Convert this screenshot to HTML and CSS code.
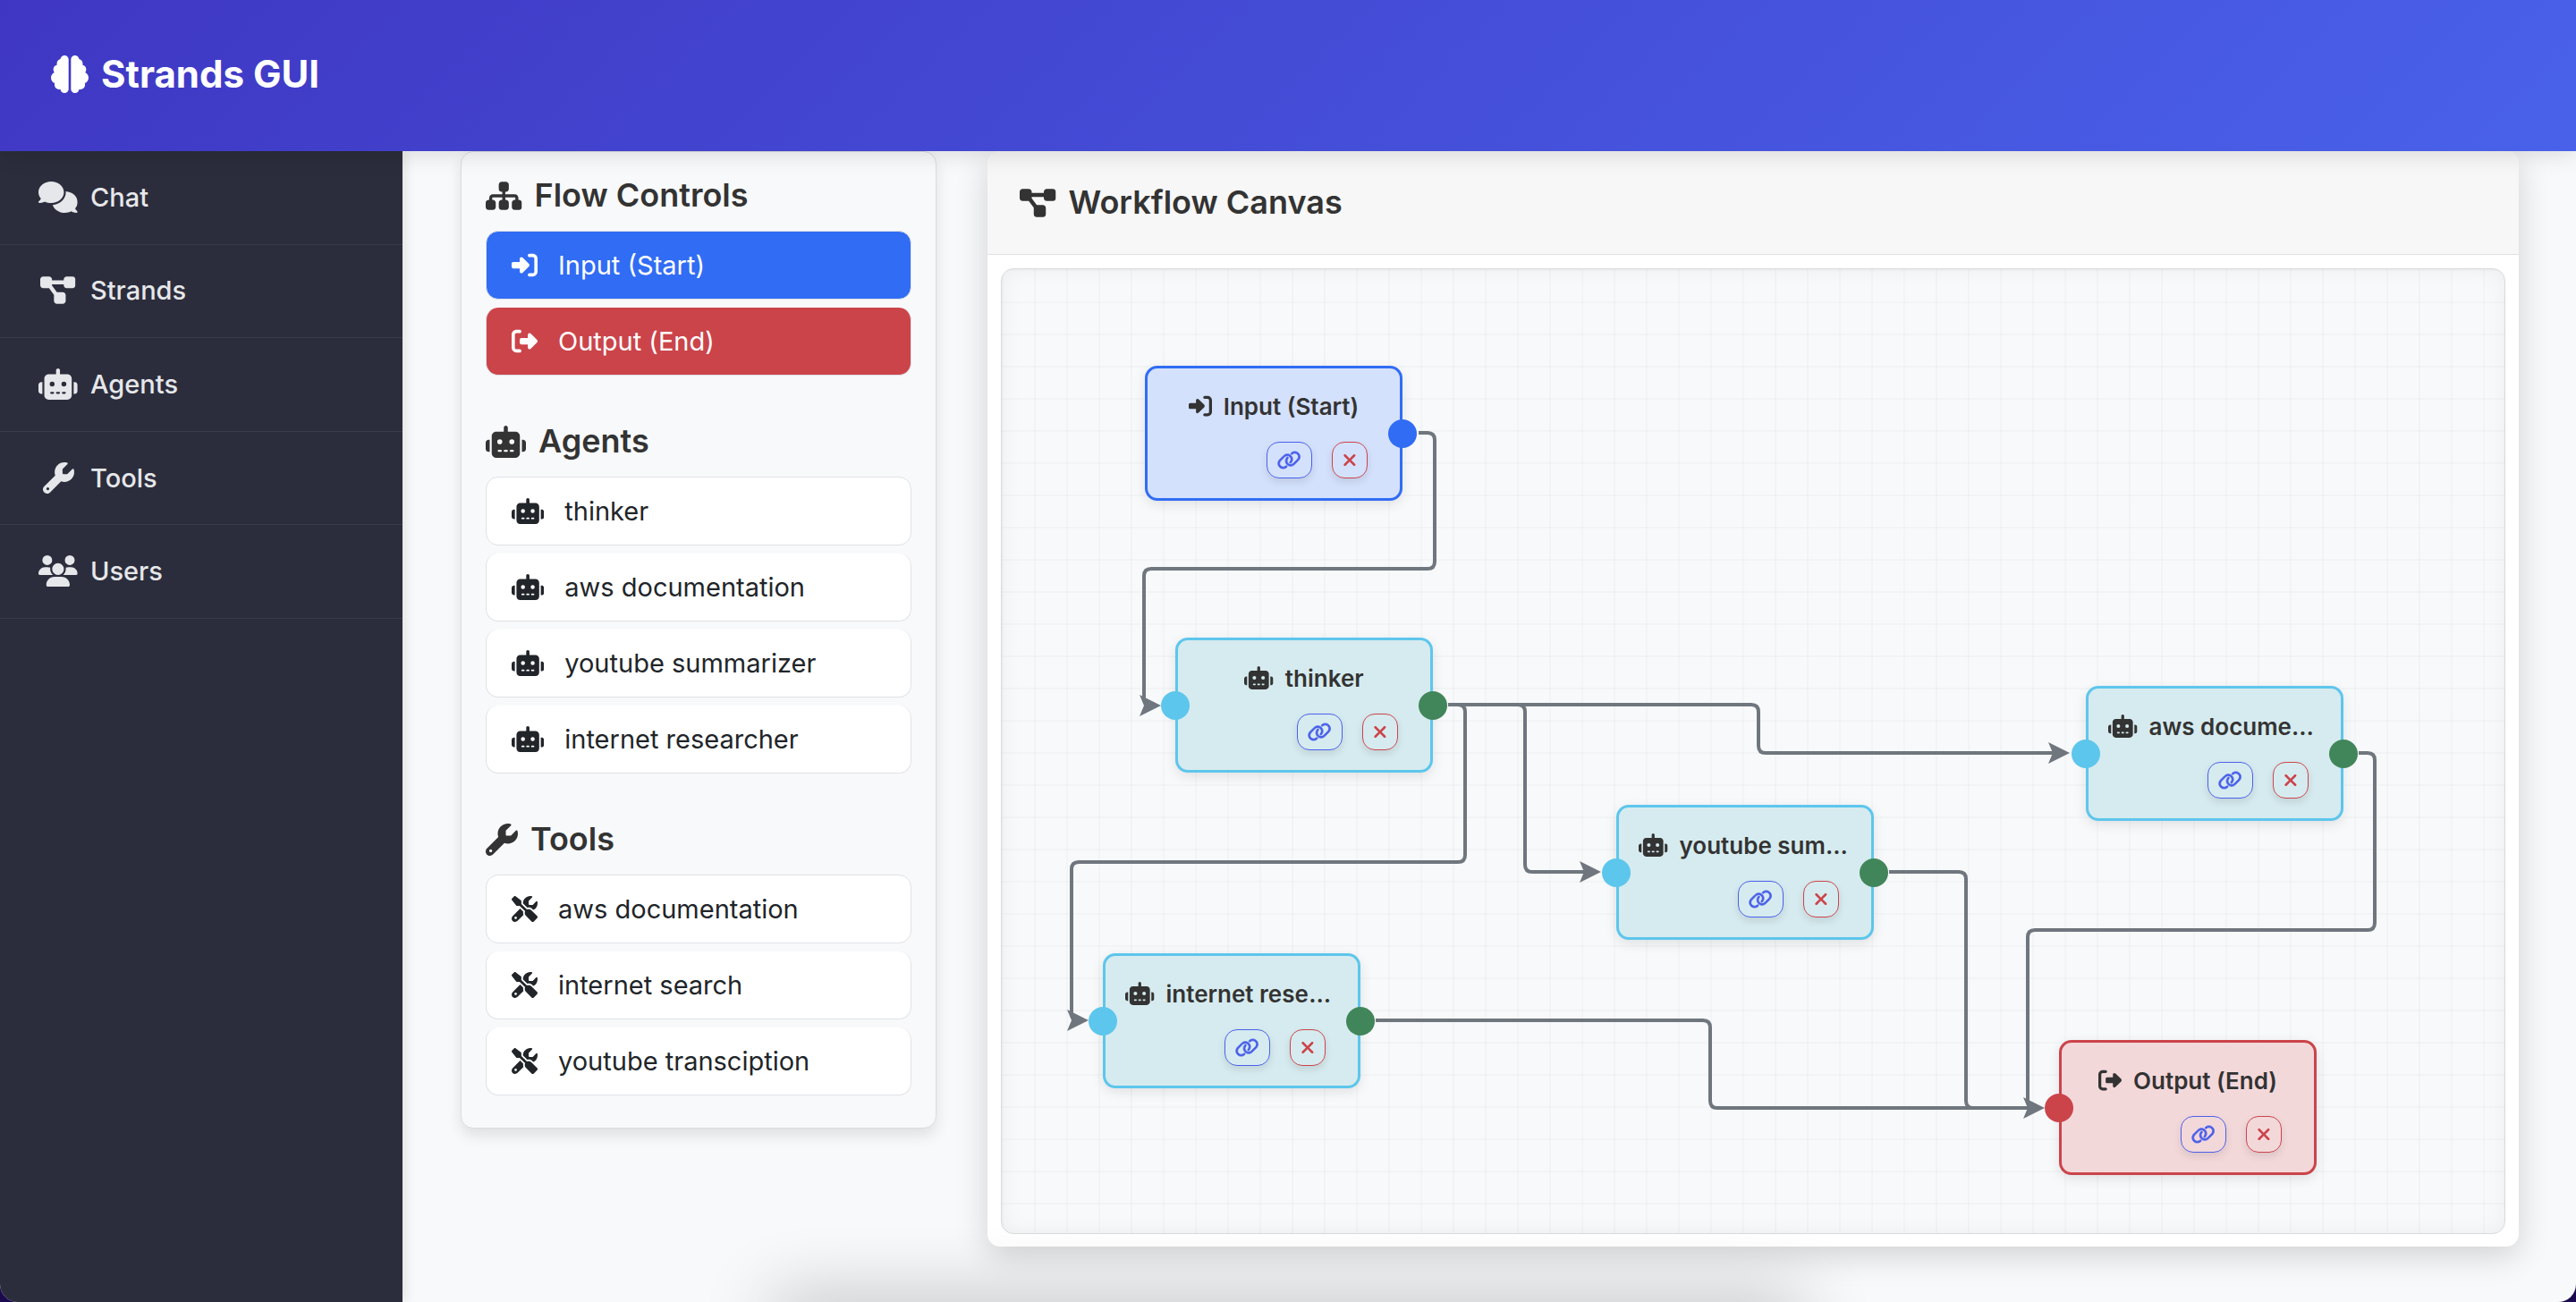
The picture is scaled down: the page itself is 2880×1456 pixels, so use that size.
FILE: index.html
```html
<!DOCTYPE html>
<html lang="en">
<head>
<meta charset="utf-8">
<title>Strands GUI</title>
<link rel="stylesheet" href="styles.css">
</head>
<body>
<svg class="sprite" aria-hidden="true">
  <symbol id="i-brain" viewBox="0 0 512 512"><path d="M184 0c30.900 0 56 25.100 56 56V456c0 30.900-25.100 56-56 56c-28.900 0-52.700-21.900-55.700-50.100c-5.200 1.400-10.700 2.100-16.300 2.100c-35.300 0-64-28.700-64-64c0-7.400 1.300-14.600 3.600-21.200C21.400 367.400 0 338.200 0 304c0-31.900 18.700-59.500 45.800-72.300C37.100 220.800 32 207 32 192c0-30.700 21.600-56.300 50.400-62.600C80.800 123.900 80 118 80 112c0-29.900 20.600-55.100 48.300-62.100C131.300 21.900 155.100 0 184 0zM328 0c28.900 0 52.600 21.900 55.700 49.900c27.800 7 48.300 32.100 48.300 62.100c0 6-.8 11.900-2.400 17.400c28.800 6.200 50.400 31.900 50.400 62.600c0 15-5.100 28.800-13.800 39.700C493.300 244.500 512 272.100 512 304c0 34.200-21.400 63.400-51.600 74.800c2.300 6.600 3.600 13.800 3.600 21.200c0 35.300-28.700 64-64 64c-5.600 0-11.100-.7-16.300-2.100c-3 28.200-26.800 50.100-55.700 50.100c-30.900 0-56-25.100-56-56V56c0-30.900 25.100-56 56-56z"/></symbol>
  <symbol id="i-comments" viewBox="0 0 640 512"><path d="M208 352c114.900 0 208-78.800 208-176S322.900 0 208 0S0 78.800 0 176c0 38.600 14.700 74.300 39.600 103.400c-3.500 9.400-8.700 17.700-14.200 24.700c-4.800 6.200-9.700 11-13.300 14.300c-1.800 1.600-3.300 2.900-4.300 3.700c-.5 .4-.9 .7-1.100 .8l-.2 .2C1 327.200-1.400 334.400 .8 340.900S9.100 352 16 352c21.800 0 43.800-5.600 62.100-12.500c9.200-3.500 17.800-7.400 25.200-11.400C134.100 343.300 169.800 352 208 352zM448 176c0 112.300-99.100 196.900-216.500 207C255.800 457.400 336.400 512 432 512c38.200 0 73.900-8.700 104.700-23.900c7.500 4 16 7.900 25.200 11.400c18.300 6.900 40.300 12.500 62.100 12.500c6.900 0 13.100-4.500 15.200-11.100c2.100-6.600-.2-13.800-5.800-17.900l-.2-.2c-.2-.2-.6-.4-1.100-.8c-1-.8-2.500-2-4.300-3.700c-3.600-3.300-8.500-8.100-13.300-14.300c-5.500-7-10.700-15.400-14.200-24.700c24.900-29 39.600-64.700 39.600-103.400c0-92.800-84.900-168.900-192.600-175.500c.4 5.100 .6 10.300 .6 15.500z"/></symbol>
  <symbol id="i-diagram" viewBox="0 0 576 512"><path d="M0 80C0 53.500 21.500 32 48 32h96c26.500 0 48 21.500 48 48V96H384V80c0-26.500 21.500-48 48-48h96c26.500 0 48 21.500 48 48v96c0 26.500-21.500 48-48 48H432c-26.500 0-48-21.500-48-48V160H192v16c0 1.700-.1 3.400-.3 5L272 288h96c26.500 0 48 21.500 48 48v96c0 26.500-21.500 48-48 48H272c-26.500 0-48-21.500-48-48V336c0-1.700 .1-3.400 .3-5L144 224H48c-26.500 0-48-21.500-48-48V80z"/></symbol>
  <symbol id="i-robot" viewBox="0 0 640 512"><path fill-rule="evenodd" d="M320 0c17.700 0 32 14.300 32 32V96H472c39.800 0 72 32.200 72 72V440c0 39.800-32.200 72-72 72H168c-39.800 0-72-32.200-72-72V168c0-39.800 32.200-72 72-72H288V32c0-17.700 14.300-32 32-32zM208 384c-8.800 0-16 7.200-16 16s7.200 16 16 16h32c8.800 0 16-7.200 16-16s-7.200-16-16-16H208zm96 0c-8.800 0-16 7.200-16 16s7.200 16 16 16h32c8.800 0 16-7.200 16-16s-7.200-16-16-16H304zm96 0c-8.800 0-16 7.200-16 16s7.200 16 16 16h32c8.800 0 16-7.200 16-16s-7.200-16-16-16H400zM264 256a40 40 0 1 0 -80 0 40 40 0 1 0 80 0zm152 40a40 40 0 1 0 0-80 40 40 0 1 0 0 80zM48 224H64V416H48c-26.500 0-48-21.500-48-48V272c0-26.500 21.500-48 48-48zm544 0c26.500 0 48 21.500 48 48v96c0 26.500-21.500 48-48 48H576V224h16z"/></symbol>
  <symbol id="i-wrench" viewBox="0 0 512 512"><path d="M352 320c88.400 0 160-71.600 160-160c0-15.300-2.200-30.100-6.200-44.200c-3.100-10.800-16.400-13.200-24.300-5.300l-76.800 76.800c-3 3-7.100 4.700-11.300 4.700H336c-8.800 0-16-7.200-16-16V118.600c0-4.200 1.700-8.300 4.700-11.300l76.800-76.800c7.900-7.900 5.400-21.200-5.300-24.300C382.100 2.200 367.300 0 352 0C263.600 0 192 71.600 192 160c0 19.100 3.400 37.500 9.500 54.500L19.900 396.100C7.200 408.800 0 426.100 0 444.100C0 481.600 30.400 512 67.900 512c18 0 35.300-7.200 48-19.900L297.500 310.500c17 6.200 35.400 9.500 54.500 9.500zM80 408a24 24 0 1 1 0 48 24 24 0 1 1 0-48z"/></symbol>
  <symbol id="i-users" viewBox="0 0 640 512"><path d="M144 0a80 80 0 1 1 0 160A80 80 0 1 1 144 0zM512 0a80 80 0 1 1 0 160A80 80 0 1 1 512 0zM0 298.700C0 239.800 47.800 192 106.700 192h42.700c15.900 0 31 3.500 44.600 9.700c-1.300 7.200-1.900 14.700-1.900 22.300c0 38.200 16.800 72.500 43.300 96c-.2 0-.4 0-.7 0H21.300C9.600 320 0 310.400 0 298.700zM405.300 320c-.2 0-.4 0-.7 0c26.600-23.500 43.300-57.800 43.300-96c0-7.600-.7-15-1.900-22.300c13.600-6.300 28.700-9.700 44.600-9.700h42.700C592.200 192 640 239.800 640 298.700c0 11.800-9.600 21.300-21.300 21.300H405.300zM224 224a96 96 0 1 1 192 0 96 96 0 1 1 -192 0zM128 485.300C128 411.700 187.700 352 261.300 352H378.700C452.300 352 512 411.700 512 485.300c0 14.700-11.900 26.700-26.700 26.700H154.700c-14.700 0-26.700-11.900-26.700-26.700z"/></symbol>
  <symbol id="i-sitemap" viewBox="0 0 576 512"><path d="M208 80c0-26.500 21.500-48 48-48h64c26.500 0 48 21.500 48 48v64c0 26.500-21.500 48-48 48h-8v40H464c30.900 0 56 25.100 56 56v32h8c26.500 0 48 21.500 48 48v64c0 26.500-21.500 48-48 48H464c-26.500 0-48-21.500-48-48V368c0-26.500 21.500-48 48-48h8V288c0-4.400-3.600-8-8-8H312v40h8c26.500 0 48 21.500 48 48v64c0 26.500-21.500 48-48 48H256c-26.500 0-48-21.500-48-48V368c0-26.500 21.500-48 48-48h8V280H112c-4.400 0-8 3.600-8 8v32h8c26.500 0 48 21.500 48 48v64c0 26.500-21.500 48-48 48H48c-26.500 0-48-21.500-48-48V368c0-26.500 21.500-48 48-48h8V288c0-30.900 25.100-56 56-56H264V192h-8c-26.500 0-48-21.500-48-48V80z"/></symbol>
  <symbol id="i-in" viewBox="0 0 512 512"><path d="M217.900 105.900L340.700 228.700c7.200 7.200 11.300 17.100 11.300 27.300s-4.100 20.100-11.300 27.300L217.900 406.100c-6.400 6.400-15 9.900-24 9.900c-18.700 0-33.900-15.200-33.900-33.900l0-62.100L32 320c-17.700 0-32-14.300-32-32l0-64c0-17.700 14.300-32 32-32l128 0 0-62.100c0-18.700 15.200-33.900 33.900-33.900c9 0 17.600 3.600 24 9.900zM352 416l64 0c17.700 0 32-14.300 32-32l0-256c0-17.700-14.300-32-32-32l-64 0c-17.700 0-32-14.300-32-32s14.300-32 32-32l64 0c53 0 96 43 96 96l0 256c0 53-43 96-96 96l-64 0c-17.700 0-32-14.300-32-32s14.300-32 32-32z"/></symbol>
  <symbol id="i-out" viewBox="0 0 512 512"><path d="M377.900 105.900L500.700 228.700c7.200 7.200 11.300 17.100 11.300 27.300s-4.100 20.100-11.300 27.300L377.900 406.100c-6.400 6.400-15 9.900-24 9.900c-18.700 0-33.900-15.200-33.900-33.900l0-62.100-128 0c-17.700 0-32-14.300-32-32l0-64c0-17.700 14.300-32 32-32l128 0 0-62.100c0-18.700 15.200-33.900 33.900-33.900c9 0 17.600 3.600 24 9.900zM160 96L96 96c-17.700 0-32 14.300-32 32l0 256c0 17.700 14.300 32 32 32l64 0c17.700 0 32 14.300 32 32s-14.300 32-32 32l-64 0c-53 0-96-43-96-96L0 128C0 75 43 32 96 32l64 0c17.700 0 32 14.300 32 32s-14.300 32-32 32z"/></symbol>
  <symbol id="i-tools" viewBox="0 0 512 512"><path d="M78.600 5C69.100-2.400 55.600-1.500 47 7L7 47c-8.500 8.500-9.400 22-2.100 31.600l80 104c4.500 5.900 11.600 9.400 19 9.400h54.100l109 109c-14.700 29-10 65.400 14.300 89.600l112 112c12.500 12.500 32.800 12.500 45.300 0l64-64c12.500-12.500 12.500-32.800 0-45.300l-112-112c-24.200-24.200-60.600-29-89.600-14.300l-109-109V104c0-7.500-3.500-14.500-9.400-19L78.600 5zM19.900 396.100C7.200 408.800 0 426.100 0 444.100C0 481.600 30.400 512 67.900 512c18 0 35.300-7.200 48-19.900L233.700 374.300c-7.800-20.900-9-43.600-3.600-65.100l-61.700-61.700L19.900 396.100zM512 144c0-10.500-1.100-20.700-3.200-30.500c-2.400-11.200-16.100-14.100-24.200-6l-63.900 63.900c-3 3-7.100 4.700-11.300 4.700H352c-8.800 0-16-7.200-16-16V102.600c0-4.200 1.700-8.300 4.700-11.300l63.900-63.900c8.100-8.100 5.200-21.800-6-24.200C388.700 1.100 378.500 0 368 0C288.500 0 224 64.500 224 144l0 .8 85.300 85.300c36-9.100 75.800 .5 104 28.700L429 274.500c49-23 83-72.800 83-130.500zM56 432a24 24 0 1 1 48 0 24 24 0 1 1 -48 0z"/></symbol>
  <symbol id="i-link" viewBox="0 0 640 512"><path d="M580.300 267.200c56.200-56.200 56.200-147.300 0-203.500C526.800 10.200 440.900 7.300 383.900 57.200l-6.100 5.400c-10 8.700-11 23.900-2.300 33.900s23.900 11 33.900 2.300l6.100-5.400c38-33.200 95.200-31.300 130.900 4.400c37.400 37.400 37.400 98.100 0 135.600L433.100 346.600c-37.400 37.400-98.200 37.400-135.600 0c-35.700-35.700-37.600-92.900-4.400-130.900l4.700-5.400c8.700-10 7.700-25.100-2.300-33.900s-25.100-7.700-33.900 2.300l-4.700 5.400c-49.800 57-46.900 142.900 6.600 196.400c56.200 56.200 147.300 56.200 203.500 0L580.300 267.200zM59.700 244.800C3.500 301 3.500 392.100 59.700 448.200c53.600 53.600 139.500 56.400 196.500 6.500l6.100-5.400c10-8.700 11-23.900 2.300-33.900s-23.900-11-33.900-2.300l-6.100 5.400c-38 33.200-95.200 31.300-130.900-4.400c-37.400-37.400-37.400-98.100 0-135.600L207 165.400c37.400-37.400 98.100-37.400 135.600 0c35.700 35.700 37.600 92.900 4.400 130.900l-5.400 6.100c-8.700 10-7.700 25.100 2.300 33.900s25.100 7.700 33.900-2.300l5.400-6.100c49.900-57 47-142.900-6.500-196.500c-56.200-56.200-147.300-56.200-203.500 0L59.700 244.800z"/></symbol>
  <symbol id="i-x" viewBox="0 0 384 512"><path d="M342.600 150.600c12.500-12.500 12.500-32.800 0-45.300s-32.800-12.500-45.300 0L192 210.700 86.600 105.400c-12.500-12.500-32.800-12.500-45.300 0s-12.500 32.800 0 45.300L146.700 256 41.400 361.400c-12.500 12.500-12.500 32.800 0 45.300s32.800 12.500 45.300 0L192 301.300 297.400 406.600c12.500 12.500 32.800 12.500 45.300 0s12.500-32.800 0-45.300L237.300 256 342.600 150.600z"/></symbol>
</svg>

<div class="window">
  <header class="topbar">
    <a class="brand" href="#"><svg class="icon sq"><use href="#i-brain"/></svg>Strands GUI</a>
  </header>
  <div class="shell">
    <nav class="sidebar">
      <div class="menu">
        <a href="#"><span class="nav-icon"><svg class="icon wide"><use href="#i-comments"/></svg></span>Chat</a>
        <a href="#"><span class="nav-icon"><svg class="icon mid"><use href="#i-diagram"/></svg></span>Strands</a>
        <a href="#"><span class="nav-icon"><svg class="icon wide"><use href="#i-robot"/></svg></span>Agents</a>
        <a href="#"><span class="nav-icon"><svg class="icon sq"><use href="#i-wrench"/></svg></span>Tools</a>
        <a href="#"><span class="nav-icon"><svg class="icon wide"><use href="#i-users"/></svg></span>Users</a>
      </div>
    </nav>
    <main class="content">
      <aside class="palette">
        <section>
          <h2><svg class="icon mid"><use href="#i-sitemap"/></svg>Flow Controls</h2>
          <ul>
            <li class="start"><svg class="icon sq"><use href="#i-in"/></svg>Input (Start)</li>
            <li class="end"><svg class="icon sq"><use href="#i-out"/></svg>Output (End)</li>
          </ul>
        </section>
        <section>
          <h2><svg class="icon wide"><use href="#i-robot"/></svg>Agents</h2>
          <ul>
            <li><svg class="icon wide"><use href="#i-robot"/></svg>thinker</li>
            <li><svg class="icon wide"><use href="#i-robot"/></svg>aws documentation</li>
            <li><svg class="icon wide"><use href="#i-robot"/></svg>youtube summarizer</li>
            <li><svg class="icon wide"><use href="#i-robot"/></svg>internet researcher</li>
          </ul>
        </section>
        <section>
          <h2><svg class="icon sq"><use href="#i-wrench"/></svg>Tools</h2>
          <ul>
            <li><svg class="icon sq"><use href="#i-tools"/></svg>aws documentation</li>
            <li><svg class="icon sq"><use href="#i-tools"/></svg>internet search</li>
            <li><svg class="icon sq"><use href="#i-tools"/></svg>youtube transciption</li>
          </ul>
        </section>
      </aside>
      <section class="card">
        <h2 class="card-head"><svg class="icon mid"><use href="#i-diagram"/></svg>Workflow Canvas</h2>
        <div class="card-body">
          <div class="canvas">
            <svg class="edges" aria-hidden="true">
              <defs><path id="tip" d="M0 0L-24 -12L-19 0L-24 12Z"/></defs>
              <g class="lines">
                <path d="M466 183H476Q484 183 484 191V327Q484 335 476 335H167Q159 335 159 343V480Q159 488 167 488"/>
                <path d="M499 487H510Q518 487 518 495V655Q518 663 510 663H86Q78 663 78 671V832Q78 840 86 840"/>
                <path d="M499 487H577Q585 487 585 495V666Q585 674 593 674H655"/>
                <path d="M499 487H838Q846 487 846 495V533Q846 541 854 541H1178"/>
                <path d="M992 674H1070Q1078 674 1078 682V930Q1078 938 1086 938H1150"/>
                <path d="M418 840H784Q792 840 792 848V930Q792 938 800 938H1150"/>
                <path d="M1517 541H1527Q1535 541 1535 549V731Q1535 739 1527 739H1155Q1147 739 1147 747V930Q1147 938 1155 938"/>
              </g>
              <g class="tips">
                <use href="#tip" x="178" y="488"/>
                <use href="#tip" x="97" y="840"/>
                <use href="#tip" x="670" y="674"/>
                <use href="#tip" x="1194" y="541"/>
                <use href="#tip" x="1166" y="938"/>
              </g>
            </svg>
            <article class="node start" style="left:160px;top:108px">
              <h3><svg class="icon sq"><use href="#i-in"/></svg>Input (Start)</h3>
              <div class="actions"><button class="connect" aria-label="Connect"><svg class="icon wide"><use href="#i-link"/></svg></button><button class="remove" aria-label="Remove"><svg class="icon thin"><use href="#i-x"/></svg></button></div>
              <i class="port out"></i>
            </article>
            <article class="node" style="left:194px;top:412px">
              <h3><svg class="icon wide"><use href="#i-robot"/></svg>thinker</h3>
              <div class="actions"><button class="connect" aria-label="Connect"><svg class="icon wide"><use href="#i-link"/></svg></button><button class="remove" aria-label="Remove"><svg class="icon thin"><use href="#i-x"/></svg></button></div>
              <i class="port in"></i><i class="port out"></i>
            </article>
            <article class="node" style="left:1212px;top:466px">
              <h3><svg class="icon wide"><use href="#i-robot"/></svg>aws documentation</h3>
              <div class="actions"><button class="connect" aria-label="Connect"><svg class="icon wide"><use href="#i-link"/></svg></button><button class="remove" aria-label="Remove"><svg class="icon thin"><use href="#i-x"/></svg></button></div>
              <i class="port in"></i><i class="port out"></i>
            </article>
            <article class="node" style="left:687px;top:599px">
              <h3><svg class="icon wide"><use href="#i-robot"/></svg>youtube summarizer</h3>
              <div class="actions"><button class="connect" aria-label="Connect"><svg class="icon wide"><use href="#i-link"/></svg></button><button class="remove" aria-label="Remove"><svg class="icon thin"><use href="#i-x"/></svg></button></div>
              <i class="port in"></i><i class="port out"></i>
            </article>
            <article class="node" style="left:113px;top:765px">
              <h3><svg class="icon wide"><use href="#i-robot"/></svg>internet researcher</h3>
              <div class="actions"><button class="connect" aria-label="Connect"><svg class="icon wide"><use href="#i-link"/></svg></button><button class="remove" aria-label="Remove"><svg class="icon thin"><use href="#i-x"/></svg></button></div>
              <i class="port in"></i><i class="port out"></i>
            </article>
            <article class="node end" style="left:1182px;top:862px">
              <h3><svg class="icon sq"><use href="#i-out"/></svg>Output (End)</h3>
              <div class="actions"><button class="connect" aria-label="Connect"><svg class="icon wide"><use href="#i-link"/></svg></button><button class="remove" aria-label="Remove"><svg class="icon thin"><use href="#i-x"/></svg></button></div>
              <i class="port in"></i>
            </article>
          </div>
        </div>
      </section>
    </main>
  </div>
  <div class="dock-shadow"></div>
</div>
</body>
</html>
```
FILE: styles.css
```css
* { box-sizing: border-box; }

html { background: #1c0a50; }

body {
  margin: 0;
  font-family: Inter, "Liberation Sans", sans-serif;
  color: #212529;
}

h2, h3, ul { margin: 0; padding: 0; }
ul { list-style: none; }
a { color: inherit; text-decoration: none; }

.sprite { position: absolute; width: 0; height: 0; }

/* Icons scale with the text beside them */
.icon { height: 1em; fill: currentColor; flex: none; }
.sq { width: 1em; }
.mid { width: 1.125em; }
.wide { width: 1.25em; }
.thin { width: 0.75em; }

.window {
  position: relative;
  display: flex;
  flex-direction: column;
  min-height: 100vh;
  overflow: hidden;
  background: #f8f9fb;
  border-radius: 0 0 20px 20px;
}

.topbar {
  position: relative;
  z-index: 2;
  display: flex;
  align-items: center;
  height: 169px;
  padding: 0 57px 4px;
  background: linear-gradient(135deg, #3f37c3, #4961e9);
  box-shadow: 0 4px 24px rgba(0, 0, 0, 0.12);
}

.brand {
  display: flex;
  align-items: center;
  gap: 14px;
  font-size: 42px;
  font-weight: 700;
  color: #fff;
}

.shell { display: flex; flex: 1; }

.sidebar {
  flex: none;
  width: 450px;
  background: #2c2d3c;
  box-shadow: 3px 0 12px rgba(0, 0, 0, 0.1);
}

.menu {
  display: grid;
  grid-auto-rows: 1fr;
  height: 523px;
}

.menu a {
  display: flex;
  align-items: center;
  gap: 14px;
  padding: 0 43px 1px;
  border-bottom: 1px solid #3a3b49;
  font-size: 29px;
  font-weight: 500;
  color: #e6e7ea;
}

.nav-icon {
  display: flex;
  justify-content: center;
  width: 44px;
  font-size: 35px;
}

.content {
  flex: 1;
  min-width: 0;
  display: grid;
  grid-template-columns: 532px 1fr;
  align-items: start;
  gap: 57px;
  padding: 0 64px 0 65px;
}

h2 {
  display: flex;
  align-items: center;
  gap: 14px;
  font-size: 36px;
  line-height: 43px;
  font-weight: 600;
  color: #333;
}

.palette {
  display: grid;
  gap: 43px;
  padding: 27px;
  background: #f8f9fb;
  border: 1px solid #dbdddf;
  border-radius: 14px;
  box-shadow: 0 8px 16px rgba(0, 0, 0, 0.1);
}

.palette h2 { margin-bottom: 18px; }

.palette li {
  display: flex;
  align-items: center;
  gap: 23px;
  height: 76px;
  margin-bottom: 9px;
  padding: 0 28px;
  background: #fff;
  border: 1px solid #dee2e6;
  border-top: 0;
  border-radius: 14px;
  font-size: 29px;
}

.palette li:first-child { height: 77px; border-top: 1px solid #dee2e6; }
.palette li.start { background: #316cf4; color: #fff; }
.palette li.end { background: #cb444a; color: #fff; }

.card {
  min-width: 0;
  background: #fff;
  border-radius: 14px;
  box-shadow: 0 10px 36px rgba(0, 0, 0, 0.16);
}

.card-head {
  height: 116px;
  padding: 0 36px;
  background: #f7f7f7;
  border-bottom: 1px solid #e2e2e2;
  border-radius: 14px 14px 0 0;
}

.card-body { padding: 15px 15px 14px; }

/* Free canvas with a 36px grid */
.canvas {
  position: relative;
  height: 1080px;
  border: 1px solid #d9dadc;
  border-radius: 14px;
  background-color: #f8f9fb;
  background-image:
    linear-gradient(rgba(0, 0, 0, 0.02) 2px, transparent 2px),
    linear-gradient(90deg, rgba(0, 0, 0, 0.02) 2px, transparent 2px);
  background-size: 36px 36px;
  box-shadow: inset 0 0 24px rgba(0, 0, 0, 0.05);
}

.edges { position: absolute; inset: 0; width: 100%; height: 100%; }
.lines { fill: none; stroke: #6f767e; stroke-width: 4px; }
.tips { fill: #6f767e; }

.node {
  position: absolute;
  display: flex;
  flex-direction: column;
  gap: 18px;
  width: 288px;
  height: 151px;
  padding: 22px 22px 0;
  background: #d6ebef;
  border: 3px solid #5dc6ec;
  border-radius: 14px;
  box-shadow: 0 4px 14px rgba(0, 0, 0, 0.1);
}

.node.start { background: #d4e1fc; border-color: #316cf4; }
.node.end { background: #f3d8da; border-color: #cb444a; }

.node h3 {
  overflow: hidden;
  text-overflow: ellipsis;
  white-space: nowrap;
  text-align: center;
  font-size: 26px;
  line-height: 42px;
  font-weight: 600;
  color: #333;
}

.node h3 .icon { margin-right: 13px; vertical-align: -3px; }

.actions {
  display: flex;
  justify-content: flex-end;
  gap: 22px;
  padding-right: 14px;
}

button {
  display: flex;
  align-items: center;
  justify-content: center;
  height: 41px;
  padding: 0;
  background: none;
  border: 1px solid;
  border-radius: 14px;
  font-size: 21px;
  box-shadow: 0 4px 8px rgba(0, 0, 0, 0.1);
}

.connect { width: 51px; color: #4a60ea; }
.connect .icon { stroke: currentColor; stroke-width: 18px; }
.remove { width: 40px; color: #cb444a; }

.port {
  position: absolute;
  top: 50%;
  width: 32px;
  height: 32px;
  margin-top: -16px;
  border-radius: 50%;
}

.port.in { left: -19px; background: #5dc6ec; }
.port.out { right: -19px; background: #41865a; }
.start .port.out { background: #316cf4; }
.end .port.in { background: #cb444a; }

.dock-shadow {
  position: absolute;
  left: 30%;
  right: 30%;
  top: 100%;
  height: 40px;
  box-shadow: 0 0 80px rgba(0, 0, 0, 0.32);
}
```
